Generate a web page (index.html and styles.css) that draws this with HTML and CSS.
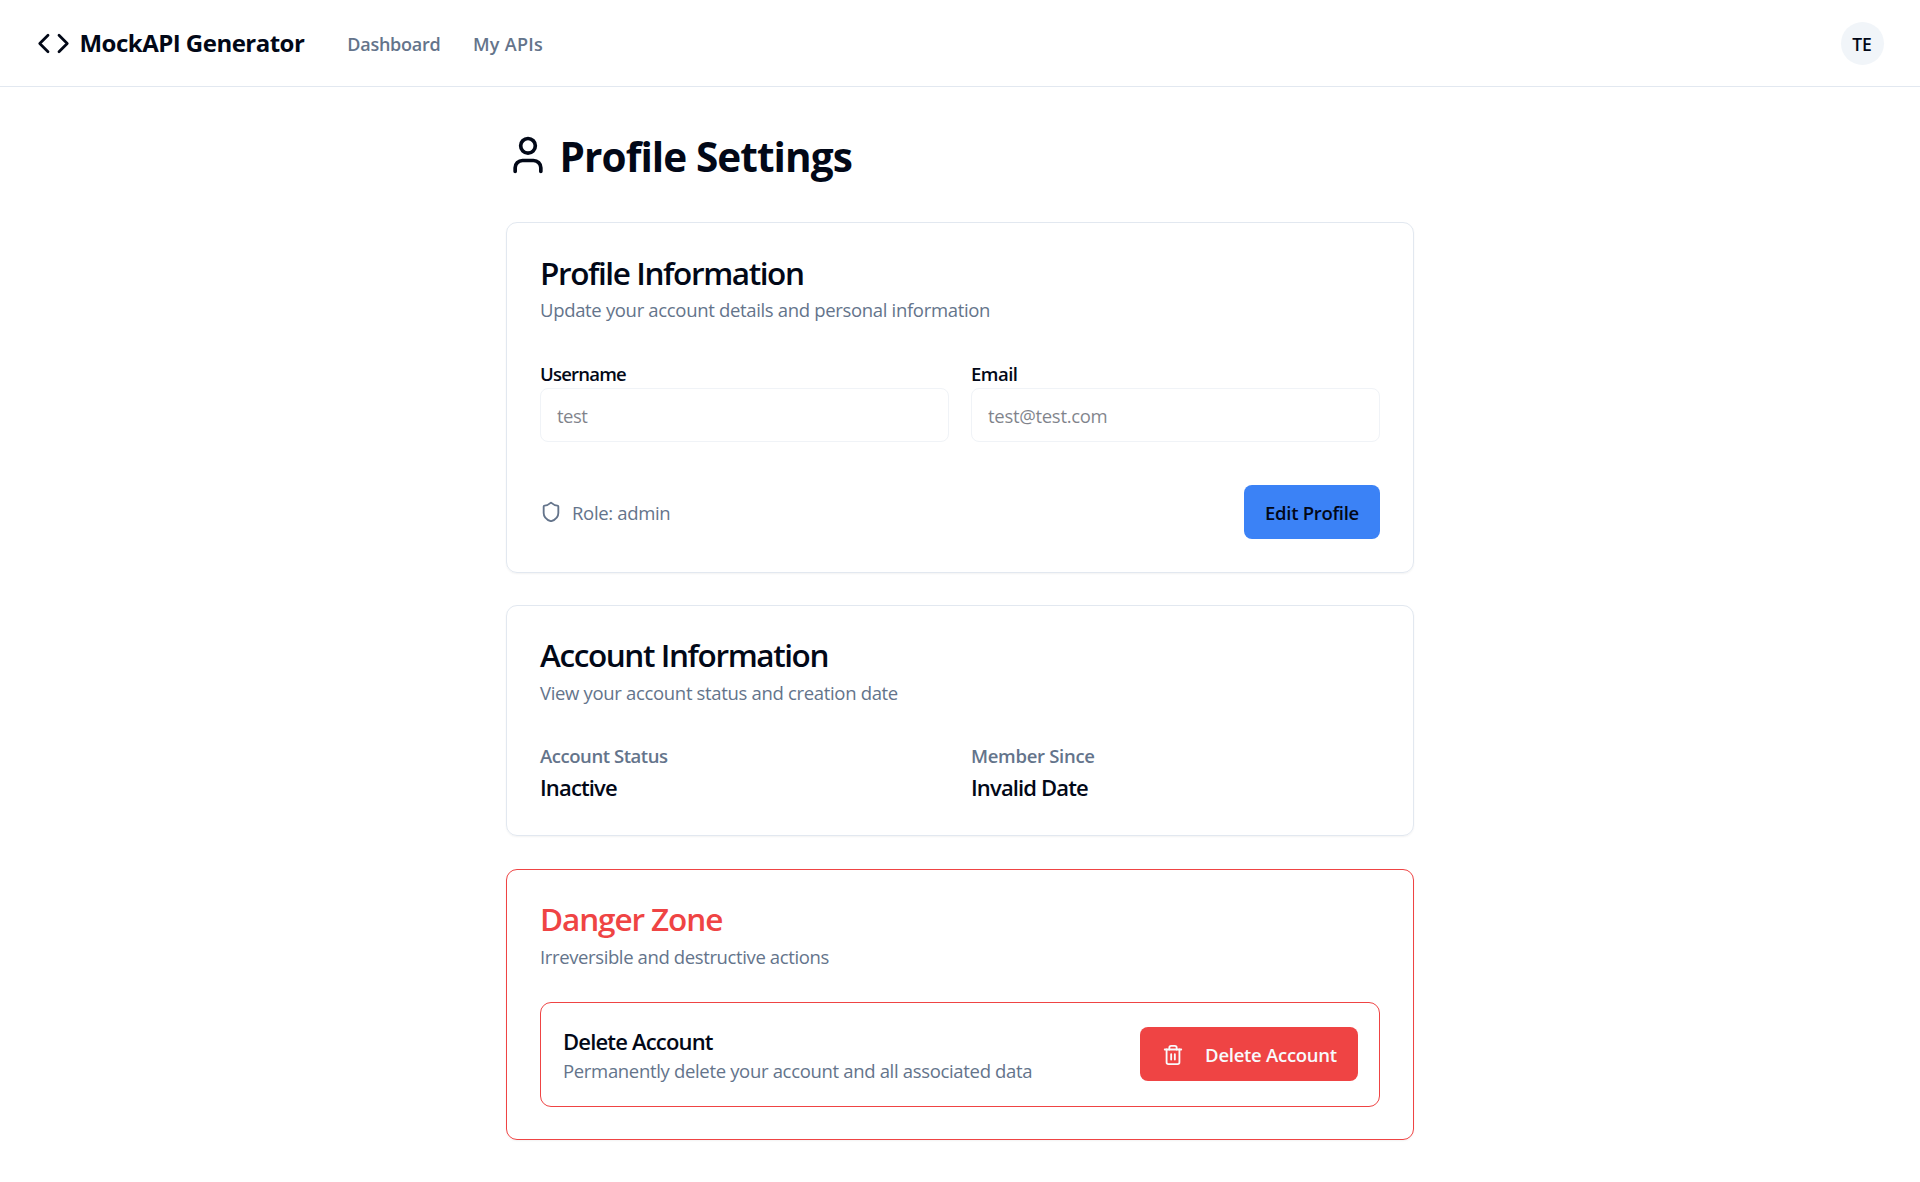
FILE: index.html
```html
<!DOCTYPE html>
<html lang="en">
<head>
<meta charset="utf-8">
<title>MockAPI Generator</title>
<link rel="stylesheet" href="styles.css">
</head>
<body>
<header class="topbar">
  <a class="brand">
    <svg class="icon brand-icon" viewBox="0 0 24 24"><path d="m16 18 6-6-6-6"/><path d="m8 6-6 6 6 6"/></svg>
    <span class="brand-name">MockAPI Generator</span>
  </a>
  <nav class="nav">
    <a class="nav-link">Dashboard</a>
    <a class="nav-link nav-apis">My APIs</a>
  </nav>
  <div class="avatar">TE</div>
</header>
<main class="page">
  <div class="page-head">
    <svg class="icon icon-user" viewBox="0 0 24 24"><path d="M19 21v-2a4 4 0 0 0-4-4H9a4 4 0 0 0-4 4v2"/><circle cx="12" cy="7" r="4"/></svg>
    <h1 class="page-title">Profile Settings</h1>
  </div>

  <section class="card">
    <h2 class="card-title">Profile Information</h2>
    <p class="muted card-sub">Update your account details and personal information</p>
    <div class="grid">
      <div class="field">
        <label class="label label-user" for="username">Username</label>
        <input class="input input-user" id="username" value="test" disabled>
      </div>
      <div class="field">
        <label class="label label-email" for="email">Email</label>
        <input class="input" id="email" value="test@test.com" disabled>
      </div>
    </div>
    <div class="card-actions">
      <div class="role muted">
        <svg class="icon icon-sm" viewBox="0 0 24 24"><path d="M20 13c0 5-3.500 7.500-7.660 8.950a1 1 0 0 1-.67-.01C7.500 20.500 4 18 4 13V6a1 1 0 0 1 1-1c2 0 4.500-1.200 6.240-2.720a1.170 1.170 0 0 1 1.520 0C14.510 3.810 17 5 19 5a1 1 0 0 1 1 1z"/></svg>
        <span class="role-text">Role: admin</span>
      </div>
      <button class="btn btn-primary">Edit Profile</button>
    </div>
  </section>

  <section class="card card-account">
    <h2 class="card-title">Account Information</h2>
    <p class="muted card-sub">View your account status and creation date</p>
    <div class="grid">
      <div>
        <p class="label label-status">Account Status</p>
        <p class="value">Inactive</p>
      </div>
      <div>
        <p class="label label-since">Member Since</p>
        <p class="value">Invalid Date</p>
      </div>
    </div>
  </section>

  <section class="card card-danger">
    <h2 class="card-title danger-title">Danger Zone</h2>
    <p class="muted card-sub danger-sub">Irreversible and destructive actions</p>
    <div class="danger-box">
      <div class="danger-text">
        <h3 class="danger-name">Delete Account</h3>
        <p class="muted">Permanently delete your account and all associated data</p>
      </div>
      <button class="btn btn-danger">
        <svg class="icon icon-sm" viewBox="0 0 24 24"><path d="M3 6h18"/><path d="M19 6v14c0 1-1 2-2 2H7c-1 0-2-1-2-2V6"/><path d="M8 6V4c0-1 1-2 2-2h4c1 0 2 1 2 2v2"/><path d="M10 11v6"/><path d="M14 11v6"/></svg>
        <span>Delete Account</span>
      </button>
    </div>
  </section>
</main>
</body>
</html>
```
FILE: styles.css
```css
* { box-sizing: border-box; }
body {
  margin: 0;
  background: #fff;
  color: #020817;
  font-family: "Open Sans", "Noto Sans", sans-serif;
  font-size: 18.5px;
  line-height: 28px;
}
h1, h2, h3, p { margin: 0; }

.icon {
  display: block;
  flex: none;
  fill: none;
  stroke: currentColor;
  stroke-width: 2;
  stroke-linecap: round;
  stroke-linejoin: round;
}
.icon-sm { width: 22px; height: 22px; }
.muted { color: #64748b; letter-spacing: -0.33px; }

.topbar {
  display: flex;
  align-items: center;
  height: 87px;
  padding: 0 36.5px 0 37px;
  border-bottom: 1px solid #e2e8f0;
}
.brand { display: flex; align-items: center; gap: 9.5px; }
.brand-icon { width: 33px; height: 33px; }
.brand-name { font-size: 24px; font-weight: 700; letter-spacing: -0.52px; }
.nav { display: flex; gap: 32.5px; margin-left: 43px; padding-top: 2px; }
.nav-link { font-size: 18px; font-weight: 600; color: #64748b; letter-spacing: -0.25px; }
.nav-apis { letter-spacing: 0.3px; }
.avatar {
  width: 43px;
  height: 43px;
  margin-left: auto;
  padding-top: 1px;
  border-radius: 50%;
  background: #f1f5f9;
  font-size: 17.5px;
  font-weight: 600;
  line-height: 43px;
  text-align: center;
}

.page { width: 908px; margin: 0 auto; padding-top: 44px; }
.page-head { display: flex; gap: 10px; height: 50px; margin-bottom: 41px; }
.icon-user { width: 44px; height: 44px; margin: 1.5px 0 0 -0.5px; }
.page-title { padding-top: 1px; font-size: 40.5px; font-weight: 700; line-height: 50px; letter-spacing: -0.92px; }

.card {
  margin-bottom: 32px;
  padding: 33px;
  border: 1px solid #e2e8f0;
  border-radius: 11px;
  box-shadow: 0 1px 2px rgba(0, 0, 0, 0.05);
}
.card-title { font-size: 31.5px; font-weight: 600; line-height: 33px; letter-spacing: -1.4px; }
.card-sub { margin: 7px 0 35px; }
.grid { display: grid; grid-template-columns: 1fr 1fr; gap: 22px; }

.field { display: flex; flex-direction: column; padding-top: 1px; }
.label { font-weight: 600; }
.label-user { letter-spacing: -0.79px; }
.label-email { letter-spacing: -0.5px; }
.label-status { color: #64748b; letter-spacing: -0.45px; }
.label-since { color: #64748b; letter-spacing: -0.3px; }
.input {
  height: 54px;
  padding: 0 16px;
  border: 1px solid #e2e8f0;
  border-radius: 8px;
  background: #fff;
  color: #020817;
  font: inherit;
  letter-spacing: -0.3px;
  opacity: 0.5;
}
.input-user { letter-spacing: -0.5px; }
.value { margin-top: 2px; font-size: 22px; font-weight: 600; line-height: 31px; letter-spacing: -0.85px; }

.card-actions { display: flex; align-items: center; justify-content: space-between; margin-top: 43px; }
.role { display: flex; align-items: center; gap: 10px; }
.role-text { padding-top: 2px; }

.btn {
  display: flex;
  align-items: center;
  justify-content: center;
  height: 54px;
  padding: 0;
  border: 0;
  border-radius: 8px;
  font: inherit;
  font-weight: 600;
}
.btn-primary { width: 136px; padding-top: 1px; background: #3b82f6; color: #020817; letter-spacing: -0.3px; }
.btn-danger { gap: 21px; width: 218px; padding: 2px 0 0 1px; background: #ef4444; color: #f8fafc; letter-spacing: -0.27px; }

.card-account { padding: 32px 33px 33px; }
.card-account .card-sub { margin-top: 8px; }
.card-account .value { margin-bottom: -1px; }

.card-danger { margin-top: 33px; padding: 32px 33px; border-color: #ef4444; }
.danger-title { letter-spacing: -1.1px; color: #ef4444; }
.danger-sub { margin: 8px 0 31px; letter-spacing: -0.38px; }
.danger-box {
  display: flex;
  align-items: center;
  justify-content: space-between;
  height: 105px;
  padding: 0 21px 1px 22px;
  border: 1px solid #ef4444;
  border-radius: 11px;
}
.danger-text { padding-top: 2px; }
.danger-name { font-size: 22px; font-weight: 600; line-height: 31px; letter-spacing: -0.82px; }
```
